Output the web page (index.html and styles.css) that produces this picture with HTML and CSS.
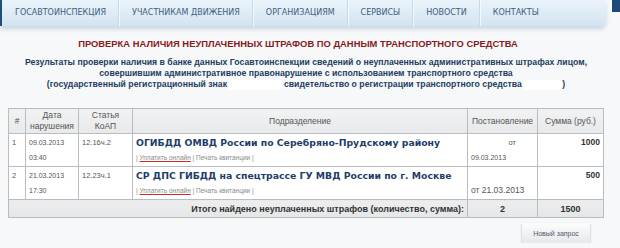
FILE: index.html
```html
<!DOCTYPE html>
<html lang="ru">
<head>
    <meta charset="UTF-8">
    <title>Проверка штрафов</title>
    <link rel="stylesheet" href="styles.css">
</head>
<body>
    <div class="header">
        <ul class="topnav">
            <li><a href="#">Госавтоинспекция</a></li>
            <li><a href="#">Участникам движения</a></li>
            <li><a href="#">Организациям</a></li>
            <li><a href="#">Сервисы</a></li>
            <li><a href="#">Новости</a></li>
            <li><a href="#">Контакты</a></li>
        </ul>
        <div class="header-edge"></div>
    </div>

    <div class="content">
        <h1>Проверка наличия неуплаченных штрафов по данным транспортного средства</h1>

        <p class="intro">
            Результаты проверки наличия в банке данных Госавтоинспекции сведений о неуплаченных административных штрафах лицом,<br>
            совершившим административное правонарушение с использованием транспортного средства<br>
            (государственный регистрационный знак <span class="blank wide"></span> свидетельство о регистрации транспортного средства <span class="blank"></span>)
        </p>

        <table class="fines">
            <thead>
                <tr>
                    <th class="col-num">#</th>
                    <th class="col-date">Дата<br>нарушения</th>
                    <th class="col-art">Статья<br>КоАП</th>
                    <th class="col-dept">Подразделение</th>
                    <th class="col-doc">Постановление</th>
                    <th class="col-sum">Сумма (руб.)</th>
                </tr>
            </thead>
            <tbody>
                <tr>
                    <td>1</td>
                    <td class="small">09.03.2013<br>03:40</td>
                    <td>12.16ч.2</td>
                    <td>
                        <div class="dept">ОГИБДД ОМВД России по Серебряно-Прудскому району</div>
                        <div class="actions">| <a href="#" class="pay">Уплатить онлайн</a> | <a href="#">Печать квитанции</a> |</div>
                    </td>
                    <td>
                        <div class="doc-from">от</div>
                        <div class="small">09.03.2013</div>
                    </td>
                    <td class="sum">1000</td>
                </tr>
                <tr>
                    <td>2</td>
                    <td class="small">21.03.2013<br>17:30</td>
                    <td>12.23ч.1</td>
                    <td>
                        <div class="dept">СР ДПС ГИБДД на спецтрассе ГУ МВД России по г. Москве</div>
                        <div class="actions">| <a href="#" class="pay">Уплатить онлайн</a> | <a href="#">Печать квитанции</a> |</div>
                    </td>
                    <td>
                        <div>&nbsp;</div>
                        <div class="doc-big">от 21.03.2013</div>
                    </td>
                    <td class="sum">500</td>
                </tr>
            </tbody>
            <tfoot>
                <tr>
                    <td colspan="4" class="total-label">Итого найдено неуплаченных штрафов (количество, сумма):</td>
                    <td class="total-value">2</td>
                    <td class="total-value">1500</td>
                </tr>
            </tfoot>
        </table>

        <div class="form-actions">
            <button type="button">Новый запрос</button>
        </div>
    </div>
</body>
</html>
```

FILE: styles.css
```css
/* General */
body {
    margin: 0;
    font-family: "Liberation Sans", Arial, sans-serif;
    background-color: #f6f8fa;
}

/* Top navigation */
.header {
    display: flex;
    align-items: flex-start;
}

.topnav {
    flex: 1;
    display: flex;
    height: 26px;
    margin: 0 6px 0 0;
    padding: 0;
    list-style: none;
    background: linear-gradient(#eaf3fa, #d2e4f1);
    border-left: 2px solid #1d4f7c;
    border-radius: 0 0 6px 0;
    box-shadow: 0 3px 4px rgba(120, 150, 175, 0.35);
}

.topnav li {
    border-right: 1px solid #c6d9e7;
    box-shadow: 1px 0 0 #f3f8fc;
}

.topnav li:last-child {
    border-right: none;
    box-shadow: none;
}

.topnav a {
    display: block;
    padding: 0 12px 0 13px;
    line-height: 26px;
    font-family: "DejaVu Sans", sans-serif;
    font-size: 8px;
    text-transform: uppercase;
    color: #40607f;
    text-decoration: none;
}

.header-edge {
    width: 8px;
    height: 12px;
    background-color: #1b4a78;
}

/* Content */
.content {
    padding: 0 16px 0 8px;
}

h1 {
    margin: 12px 16px 0 0;
    font-size: 9.4px;
    text-transform: uppercase;
    text-align: center;
    color: #8a1a1a;
}

.intro {
    margin: 8px 0 0;
    font-size: 8.7px;
    font-weight: bold;
    line-height: 11px;
    text-align: center;
    color: #243d5e;
}

.blank {
    display: inline-block;
    width: 38px;
    height: 10px;
    vertical-align: middle;
    background-color: #ffffff;
}

.blank.wide {
    width: 52px;
}

/* Fines table */
.fines {
    width: 100%;
    margin-top: 18px;
    border-collapse: collapse;
    font-size: 7.5px;
    color: #555;
}

.fines th,
.fines td {
    border: 1px solid #b9bdc0;
    padding: 1px 3px;
}

.fines th {
    height: 21px;
    font-size: 8.5px;
    font-weight: normal;
    line-height: 11px;
    background: linear-gradient(#f0f2f3, #e7e9ea);
}

.col-num { width: 10px; }
.col-date { width: 46px; }
.col-art { width: 47px; }
.col-doc { width: 63px; }
.col-sum { width: 59px; }

.fines td {
    height: 30px;
    vertical-align: top;
    line-height: 15px;
    background-color: #ffffff;
}

.fines td.small,
.fines .small {
    font-size: 7px;
}

.dept {
    font-family: "DejaVu Sans", sans-serif;
    font-size: 9.3px;
    font-weight: bold;
    color: #1e3d6a;
}

.actions {
    font-size: 6.5px;
    color: #8a8a8a;
}

.actions a {
    color: #8a8a8a;
    text-decoration: none;
}

.actions a.pay {
    text-decoration: underline;
    text-decoration-color: #d12a2a;
}

.doc-from {
    padding-right: 18px;
    text-align: right;
}

.doc-big {
    font-size: 8.5px;
}

.sum {
    text-align: right;
    font-size: 8.5px;
    font-weight: bold;
    color: #333;
}

.fines tfoot td {
    height: 15px;
    line-height: 14px;
    vertical-align: middle;
    font-size: 9px;
    font-weight: bold;
    color: #333;
    background: linear-gradient(#eceeef, #e4e6e7);
}

.total-label {
    text-align: right;
}

.total-value {
    text-align: center;
}

/* New query button */
.form-actions {
    display: flex;
    justify-content: flex-end;
    margin-top: 5px;
    padding-right: 14px;
}

button {
    width: 68px;
    height: 20px;
    font-family: inherit;
    font-size: 7px;
    color: #4c5c6c;
    border: none;
    background: linear-gradient(#fdfdfd, #e5e7e9);
    box-shadow: 0 1px 2px rgba(0, 0, 0, 0.3);
}
```
